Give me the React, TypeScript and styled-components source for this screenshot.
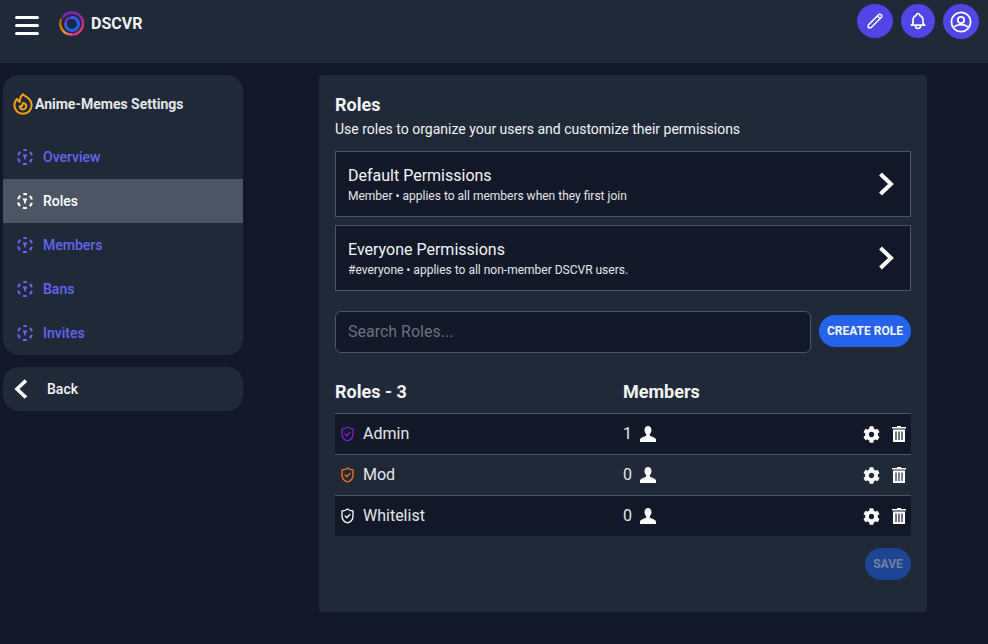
import React from "react";
import styled, { createGlobalStyle } from "styled-components";
import { FaCog } from "react-icons/fa";

const GlobalStyle = createGlobalStyle`
  html, body { margin: 0; padding: 0; background: #111827; }
  body { font-family: Roboto, "Liberation Sans", sans-serif; color: #fff; }
  * { box-sizing: border-box; }
`;

const navItems = ["Overview", "Roles", "Members", "Bans", "Invites"];

const permissions = [
  { title: "Default Permissions", text: "Member • applies to all members when they first join" },
  { title: "Everyone Permissions", text: "#everyone • applies to all non-member DSCVR users." },
];

const roles = [
  { name: "Admin", count: 1, color: "#7e22ce" },
  { name: "Mod", count: 0, color: "#f97316" },
  { name: "Whitelist", count: 0, color: "#ffffff" },
];

const Logo = () => (
  <svg width="25" height="25" viewBox="0 0 25 25" fill="none" strokeLinecap="round">
    <defs>
      <linearGradient id="ring" x1="0.1" y1="0" x2="0.9" y2="1">
        <stop offset="0" stopColor="#7e22ce" />
        <stop offset="0.5" stopColor="#a21caf" />
        <stop offset="1" stopColor="#f43f5e" />
      </linearGradient>
      <linearGradient id="tail" x1="0" y1="0" x2="1" y2="1">
        <stop offset="0" stopColor="#b45309" />
        <stop offset="0.6" stopColor="#f59e0b" />
        <stop offset="1" stopColor="#ec4899" />
      </linearGradient>
    </defs>
    <path d="M4.500 5.500A11 11 0 1 1 12 23.500" stroke="url(#ring)" strokeWidth="2.600" />
    <path d="M2 8.500A11 11 0 0 0 12 23.500" stroke="url(#tail)" strokeWidth="2.400" />
    <path d="M13 6.500a6.500 6.500 0 1 1-6.500 6.500" stroke="#2563eb" strokeWidth="3" />
    <path d="M6.500 13c0-4 3-6.500 6.500-6.500" stroke="#7c3aed" strokeWidth="2.200" />
    <path d="M12.500 10a2.700 2.700 0 1 1-2.700 2.700" stroke="#0f2a5f" strokeWidth="1.800" />
  </svg>
);

const Fire = () => (
  <svg width="26" height="26" viewBox="0 0 24 24" fill="none" stroke="#f59e0b" strokeWidth="1.900" strokeLinecap="round" strokeLinejoin="round">
    <path d="M17.657 18.657A8 8 0 016.343 7.343S7 9 9 10c0-2 .5-5 2.986-7C14 5 16.090 5.777 17.656 7.343A7.975 7.975 0 0120 13a7.975 7.975 0 01-2.343 5.657z" />
    <path d="M9.879 16.121A3 3 0 1012.015 11L11 14H9c0 .768.293 1.536.879 2.121z" />
  </svg>
);

const NavGlyph = () => (
  <svg width="18" height="18" viewBox="0 0 18 18" fill="none">
    <circle cx="9" cy="9" r="7" stroke="currentColor" strokeWidth="2.100" strokeDasharray="4 3.330" strokeDashoffset="2" transform="rotate(-90 9 9)" />
    <path d="M6.400 6.600h5.200L9.800 9.400v2H8.200v-2z" fill="currentColor" />
  </svg>
);

const ChevronRight = () => (
  <svg width="16" height="24" viewBox="0 0 16 24" fill="none" stroke="#fff" strokeWidth="4">
    <path d="M2.500 2 13 12 2.500 22" />
  </svg>
);

const ChevronLeft = () => (
  <svg width="14" height="20" viewBox="0 0 14 20" fill="none" stroke="#fff" strokeWidth="3.600">
    <path d="M12 1.500 3 10l9 8.500" />
  </svg>
);

const Shield = ({ color }: { color: string }) => (
  <svg width="13" height="16" viewBox="0 0 13 16" fill="none" stroke={color} strokeWidth="1.300" strokeLinejoin="round" strokeLinecap="round">
    <path d="M6.500 1C8 2.200 10 3 12 3v5c0 3.500-2.500 6-5.500 7C3.500 14 1 11.500 1 8V3c2 0 4-.8 5.500-2z" />
    <path d="M4.200 8l1.700 1.700 3-3.200" />
  </svg>
);

const Person = () => (
  <svg width="16" height="16" viewBox="0 0 16 16" fill="#fff">
    <path d="M8 0C5.800 0 4.500 1.700 4.500 4c0 1.800.8 3.200 1.700 4.200v1.500C4 10.500.5 11.500 0 13.500V16h16v-2.500c-.5-2-4-3-6.200-3.800V8.200c.9-1 1.700-2.400 1.700-4.200C11.500 1.700 10.200 0 8 0z" />
  </svg>
);

const Trash = () => (
  <svg width="14" height="16" viewBox="0 0 14 16" fill="#fff">
    <path d="M5 0h4v1h5v1.400H0V1h5z" />
    <path fillRule="evenodd" d="M1 3.400h12V16H1zM3.400 5.400v8.600h1.200V5.400zM6.400 5.400v8.600h1.200V5.400zM9.400 5.400v8.600h1.200V5.400z" />
  </svg>
);

export default function App() {
  return (
    <>
      <GlobalStyle />
      <Page>
        <Header>
          <Brand>
            <Burger>
              <span />
              <span />
              <span />
            </Burger>
            <Logo />
            <BrandName>DSCVR</BrandName>
          </Brand>
          <HeaderActions>
            <RoundButton $w={36} $h={34}>
              <svg width="18" height="18" viewBox="0 0 24 24" fill="none" stroke="#fff" strokeWidth="2" strokeLinecap="round" strokeLinejoin="round">
                <path d="M15.232 5.232l3.536 3.536m-2.036-5.036a2.500 2.500 0 113.536 3.536L6.500 21.036H3v-3.572L16.732 3.732z" />
              </svg>
            </RoundButton>
            <RoundButton $w={34} $h={34}>
              <svg width="20" height="20" viewBox="0 0 24 24" fill="none" stroke="#fff" strokeWidth="2" strokeLinecap="round" strokeLinejoin="round">
                <path d="M15 17h5l-1.405-1.405A2.032 2.032 0 0118 14.158V11a6.002 6.002 0 00-4-5.659V5a2 2 0 10-4 0v.341C7.670 6.165 6 8.388 6 11v3.159c0 .538-.214 1.055-.595 1.436L4 17h5m6 0v1a3 3 0 11-6 0v-1m6 0H9" />
              </svg>
            </RoundButton>
            <RoundButton $w={36} $h={35}>
              <svg width="22" height="22" viewBox="0 0 22 22" fill="none" stroke="#fff" strokeWidth="1.800">
                <circle cx="11" cy="11" r="9.600" />
                <circle cx="11" cy="9" r="3.200" />
                <path d="M4.400 16c1.400-1.600 3.800-2.400 6.600-2.400s5.200.8 6.600 2.400" />
              </svg>
            </RoundButton>
          </HeaderActions>
        </Header>
        <Body>
          <Sidebar>
            <SideCard>
              <SideTitle>
                <Fire />
                <SideTitleText>Anime-Memes Settings</SideTitleText>
              </SideTitle>
              {navItems.map((item) => (
                <NavItem key={item} $active={item === "Roles"}>
                  <NavGlyph />
                  {item}
                </NavItem>
              ))}
            </SideCard>
            <BackCard>
              <ChevronLeft />
              Back
            </BackCard>
          </Sidebar>
          <Main>
            <Title>Roles</Title>
            <Subtitle>Use roles to organize your users and customize their permissions</Subtitle>
            <PermissionList>
              {permissions.map((p) => (
                <PermissionCard key={p.title}>
                  <PermissionBody>
                    <PermissionTitle>{p.title}</PermissionTitle>
                    <PermissionText>{p.text}</PermissionText>
                  </PermissionBody>
                  <ChevronRight />
                </PermissionCard>
              ))}
            </PermissionList>
            <SearchRow>
              <SearchInput placeholder="Search Roles..." />
              <CreateButton>CREATE ROLE</CreateButton>
            </SearchRow>
            <TableHead>
              <span>Roles - 3</span>
              <span>Members</span>
            </TableHead>
            <Table>
              {roles.map((role, i) => (
                <RoleRow key={role.name} $striped={i % 2 === 0}>
                  <RoleName>
                    <Shield color={role.color} />
                    {role.name}
                  </RoleName>
                  <RoleCount>
                    {role.count}
                    <Person />
                  </RoleCount>
                  <RoleActions>
                    <FaCog size={17} color="#fff" />
                    <Trash />
                  </RoleActions>
                </RoleRow>
              ))}
            </Table>
            <Footer>
              <SaveButton>SAVE</SaveButton>
            </Footer>
          </Main>
        </Body>
      </Page>
    </>
  );
}

const Page = styled.div`
  width: 988px;
  height: 644px;
  overflow: hidden;
  background: #111827;
`;

const Header = styled.header`
  height: 63px;
  background: #1f2937;
  display: flex;
  justify-content: space-between;
  align-items: flex-start;
  padding: 4px 9px 0 15px;
`;

const Brand = styled.div`
  display: flex;
  align-items: center;
  height: 38px;
`;

const Burger = styled.div`
  width: 24px;
  display: flex;
  flex-direction: column;
  gap: 5px;
  margin: 4px 20px 0 0;
  span {
    display: block;
    height: 3px;
    border-radius: 2px;
    background: #fff;
  }
`;

const BrandName = styled.span`
  margin-left: 7px;
  font-size: 16px;
  font-weight: 700;
  color: #f3f4f6;
`;

const HeaderActions = styled.div`
  display: flex;
  align-items: flex-start;
  gap: 8px;
`;

const RoundButton = styled.div<{ $w: number; $h: number }>`
  width: ${(p) => p.$w}px;
  height: ${(p) => p.$h}px;
  border-radius: 50%;
  background: #4f46e5;
  display: flex;
  align-items: center;
  justify-content: center;
`;

const Body = styled.div`
  display: flex;
  padding: 12px 0 0 3px;
`;

const Sidebar = styled.aside`
  width: 240px;
  margin-right: 76px;
  display: flex;
  flex-direction: column;
  gap: 12px;
`;

const SideCard = styled.nav`
  background: #1f2937;
  border-radius: 16px;
  height: 280px;
  overflow: hidden;
`;

const SideTitle = styled.div`
  height: 60px;
  padding: 0 0 2px 7px;
  display: flex;
  align-items: center;
`;

const SideTitleText = styled.span`
  margin-left: -1px;
  font-size: 14px;
  font-weight: 700;
  color: #e5e7eb;
`;

const NavItem = styled.div<{ $active?: boolean }>`
  height: 44px;
  display: flex;
  align-items: center;
  gap: 9px;
  padding-left: 13px;
  font-size: 14px;
  font-weight: 500;
  color: ${(p) => (p.$active ? "#fff" : "#6366f1")};
  background: ${(p) => (p.$active ? "#4b5563" : "transparent")};
`;

const BackCard = styled.div`
  height: 44px;
  background: #1f2937;
  border-radius: 16px;
  display: flex;
  align-items: center;
  gap: 19px;
  padding-left: 11px;
  font-size: 14px;
  font-weight: 500;
  color: #f3f4f6;
`;

const Main = styled.main`
  width: 608px;
  height: 537px;
  background: #1f2937;
  border-radius: 4px;
  padding: 19px 16px 0;
`;

const Title = styled.h2`
  margin: 0;
  font-size: 18px;
  line-height: 22px;
  font-weight: 700;
  color: #f3f4f6;
`;

const Subtitle = styled.p`
  margin: 3px 0 0;
  font-size: 14px;
  line-height: 20px;
  color: #f3f4f6;
`;

const PermissionList = styled.div`
  margin-top: 12px;
  display: flex;
  flex-direction: column;
  gap: 8px;
`;

const PermissionCard = styled.div`
  height: 66px;
  background: #111827;
  border: 1px solid #4b5563;
  display: flex;
  align-items: center;
  justify-content: space-between;
  padding: 0 16px 0 12px;
`;

const PermissionBody = styled.div`
  height: 42px;
  padding-top: 2px;
`;

const PermissionTitle = styled.div`
  font-size: 16px;
  line-height: 22px;
  color: #f3f4f6;
`;

const PermissionText = styled.div`
  margin-top: 1px;
  font-size: 12px;
  line-height: 16px;
  color: #e5e7eb;
`;

const SearchRow = styled.div`
  margin-top: 20px;
  display: flex;
  align-items: center;
  gap: 8px;
`;

const SearchInput = styled.input`
  flex: 1;
  height: 42px;
  background: #111827;
  border: 1px solid #4b5563;
  border-radius: 6px;
  padding: 0 12px 2px;
  font-family: inherit;
  font-size: 16px;
  color: #fff;
  outline: none;
  &::placeholder {
    color: #6b7280;
    opacity: 1;
  }
`;

const CreateButton = styled.button`
  width: 92px;
  height: 32px;
  margin-bottom: 3px;
  border: none;
  border-radius: 16px;
  background: #2563eb;
  color: #f3f4f6;
  font-family: inherit;
  font-size: 12px;
  font-weight: 700;
  padding: 0;
`;

const TableHead = styled.div`
  margin-top: 26px;
  height: 24px;
  display: grid;
  grid-template-columns: 288px 1fr;
  align-items: center;
  font-size: 18px;
  font-weight: 700;
  color: #f3f4f6;
`;

const Table = styled.div`
  margin-top: 10px;
`;

const RoleRow = styled.div<{ $striped: boolean }>`
  height: 41px;
  padding: 0 5px 2px 0;
  border-top: 1px solid #4b5563;
  background: ${(p) => (p.$striped ? "#111827" : "#1f2937")};
  display: grid;
  grid-template-columns: 288px 1fr auto;
  align-items: center;
  font-size: 16px;
  color: #e5e7eb;
`;

const RoleName = styled.div`
  display: flex;
  align-items: center;
  gap: 9px;
  padding-left: 6px;
  svg {
    margin-top: 2px;
  }
`;

const RoleCount = styled.div`
  display: flex;
  align-items: center;
  gap: 8px;
  svg {
    margin-top: 2px;
  }
`;

const RoleActions = styled.div`
  display: flex;
  align-items: center;
  gap: 12px;
  margin-top: 2px;
`;

const Footer = styled.div`
  margin-top: 12px;
  display: flex;
  justify-content: flex-end;
`;

const SaveButton = styled.button`
  width: 46px;
  height: 32px;
  border: none;
  border-radius: 16px;
  background: #1e4494;
  color: #7280a0;
  font-family: inherit;
  font-size: 12px;
  font-weight: 700;
  padding: 0;
`;
